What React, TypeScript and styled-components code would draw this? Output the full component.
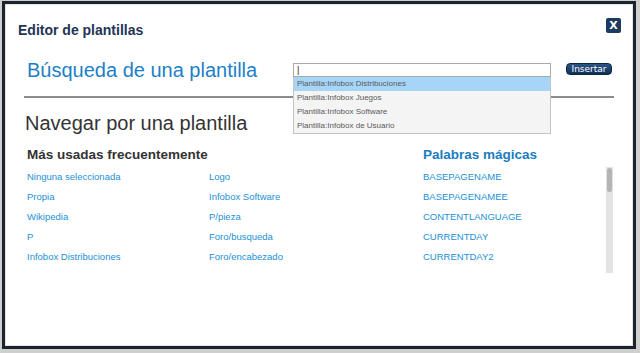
import React from 'react'
import styled, { createGlobalStyle } from 'styled-components'

const GlobalStyle = createGlobalStyle`
  html, body {
    margin: 0;
    padding: 0;
    background: #cfcfcf;
    font-family: "Liberation Sans", Arial, sans-serif;
  }
`

const Dialog = styled.div`
  box-sizing: border-box;
  width: 634px;
  height: 348px;
  margin: 1px 0 0 2px;
  border: 3px solid #1b232e;
  background: #fff;
  box-shadow: inset 0 0 0 1px #e4e4e4;
  display: flex;
  flex-direction: column;
`

const Header = styled.div`
  display: flex;
  justify-content: space-between;
  align-items: flex-start;
  padding: 14px 12px 0 13px;
`

const Title = styled.h1`
  margin: 4px 0 0;
  font-size: 14px;
  line-height: 16px;
  font-weight: bold;
  color: #1f3456;
`

const CloseButton = styled.button`
  width: 15px;
  height: 15px;
  padding: 0;
  border: none;
  border-radius: 2px;
  background: #1d3a60;
  color: #fff;
  font-family: "DejaVu Sans", sans-serif;
  font-size: 11px;
  font-weight: bold;
  line-height: 15px;
  text-align: center;
`

const SearchRow = styled.div`
  display: flex;
  align-items: center;
  padding: 23px 0 0 22px;
  height: 18px;
`

const SearchTitle = styled.h2`
  margin: 0;
  width: 266px;
  font-size: 20px;
  font-weight: normal;
  line-height: 24px;
  color: #1d7fc6;
`

const SearchBox = styled.div`
  position: relative;
  width: 258px;
`

const SearchInput = styled.div`
  box-sizing: border-box;
  height: 14px;
  border: 1px solid #a9a9a9;
  background: #fff;
  padding-left: 3px;
  font-size: 9px;
  line-height: 12px;
  color: #222;
`

const Suggestions = styled.ul`
  position: absolute;
  top: 14px;
  left: 0;
  right: 0;
  margin: 0;
  padding: 0;
  list-style: none;
  background: #f4f4f4;
  border: 1px solid #c4c4c4;
  border-top: none;
  box-sizing: border-box;
  z-index: 2;
`

const Suggestion = styled.li<{ $active?: boolean }>`
  height: 14px;
  line-height: 14px;
  padding-left: 3px;
  font-size: 8px;
  color: #5a5a5a;
  background: ${p => (p.$active ? '#a7d5f8' : 'transparent')};
`

const InsertButton = styled.button`
  margin: -3px 0 0 15px;
  width: 46px;
  height: 12px;
  padding: 0;
  border: 1px solid #0d2542;
  border-radius: 4px;
  background: linear-gradient(#2a5585, #10305a);
  color: #fff;
  font-family: "DejaVu Sans", sans-serif;
  font-size: 9px;
  line-height: 10px;
`

const Divider = styled.hr`
  margin: 17px 19px 0 19px;
  border: none;
  height: 2px;
  background: #8c8c8c;
`

const BrowseTitle = styled.h2`
  margin: 13px 0 0 20px;
  font-size: 20px;
  font-weight: normal;
  line-height: 24px;
  color: #333;
`

const Browse = styled.div`
  display: flex;
  padding: 12px 0 0 22px;
`

const Frequent = styled.div`
  width: 396px;
`

const SectionTitle = styled.h3<{ $blue?: boolean }>`
  margin: 0 0 4px;
  font-size: 13.5px;
  line-height: 16px;
  font-weight: bold;
  color: ${p => (p.$blue ? '#1a7cc1' : '#333')};
`

const LinkGrid = styled.div`
  display: grid;
  grid-template-columns: 182px 1fr;
  grid-auto-flow: column;
  grid-template-rows: repeat(5, 20px);
`

const LinkItem = styled.a`
  font-size: 9.5px;
  line-height: 20px;
  color: #2390d4;
  text-decoration: none;
  white-space: nowrap;
`

const Magic = styled.div`
  width: 190px;
`

const MagicPane = styled.div`
  display: flex;
  height: 106px;
`

const MagicList = styled.div`
  flex: 1;
  overflow: hidden;
  display: flex;
  flex-direction: column;
`

const ScrollTrack = styled.div`
  width: 7px;
  background: #e3e3e3;
  padding: 1px;
  box-sizing: border-box;
`

const ScrollThumb = styled.div`
  height: 24px;
  border-radius: 3px;
  background: #b4b4b4;
`

const frequentLinks = [
  'Ninguna seleccionada',
  'Propia',
  'Wikipedia',
  'P',
  'Infobox Distribuciones',
  'Logo',
  'Infobox Software',
  'P/pieza',
  'Foro/busqueda',
  'Foro/encabezado',
]

const magicWords = [
  'BASEPAGENAME',
  'BASEPAGENAMEE',
  'CONTENTLANGUAGE',
  'CURRENTDAY',
  'CURRENTDAY2',
  'CURRENTDAYNAME',
]

const suggestions = [
  'Plantilla:Infobox Distribuciones',
  'Plantilla:Infobox Juegos',
  'Plantilla:Infobox Software',
  'Plantilla:Infobox de Usuario',
]

const App: React.FC = () => {
  return (
    <>
      <GlobalStyle />
      <Dialog>
        <Header>
          <Title>Editor de plantillas</Title>
          <CloseButton>X</CloseButton>
        </Header>
        <SearchRow>
          <SearchTitle>Búsqueda de una plantilla</SearchTitle>
          <SearchBox>
            <SearchInput>|</SearchInput>
            <Suggestions>
              {suggestions.map((s, i) => (
                <Suggestion key={s} $active={i === 0}>{s}</Suggestion>
              ))}
            </Suggestions>
          </SearchBox>
          <InsertButton>Insertar</InsertButton>
        </SearchRow>
        <Divider />
        <BrowseTitle>Navegar por una plantilla</BrowseTitle>
        <Browse>
          <Frequent>
            <SectionTitle>Más usadas frecuentemente</SectionTitle>
            <LinkGrid>
              {frequentLinks.map(l => (
                <LinkItem key={l} href="#">{l}</LinkItem>
              ))}
            </LinkGrid>
          </Frequent>
          <Magic>
            <SectionTitle $blue>Palabras mágicas</SectionTitle>
            <MagicPane>
              <MagicList>
                {magicWords.map(w => (
                  <LinkItem key={w} href="#">{w}</LinkItem>
                ))}
              </MagicList>
              <ScrollTrack>
                <ScrollThumb />
              </ScrollTrack>
            </MagicPane>
          </Magic>
        </Browse>
      </Dialog>
    </>
  )
}

export default App
